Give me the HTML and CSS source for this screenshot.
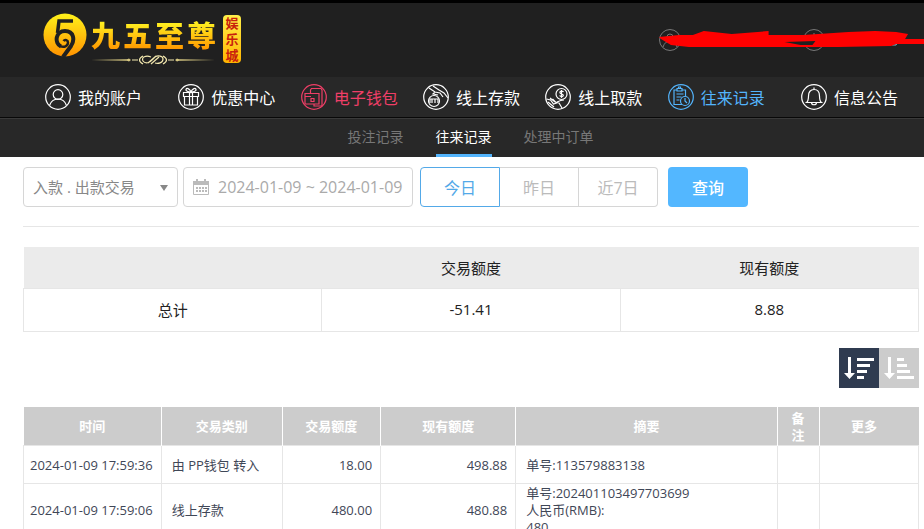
FILE: index.html
```html
<!DOCTYPE html>
<html lang="zh-CN">
<head>
    <meta charset="UTF-8">
    <meta name="viewport" content="width=device-width, initial-scale=1.0">
    <title>往来记录</title>
    <link rel="stylesheet" href="styles.css">
</head>
<body>
    <header class="header">
        <a class="logo" href="#">
            <svg class="logo-mark" viewBox="0 0 44 44">
                <defs>
                    <linearGradient id="gold" x1="0" y1="0" x2="0" y2="1">
                        <stop offset="0" stop-color="#fff21a"/>
                        <stop offset="1" stop-color="#ff9200"/>
                    </linearGradient>
                </defs>
                <circle cx="22" cy="22" r="21.500" fill="url(#gold)"/>
                <g fill="none" stroke="#202020">
                    <path d="M30 8H16L14.500 20" stroke-width="3.500"/>
                    <path d="M18 33.500C11 30 12.500 18 22 18C31 18 32 27 28 33L20 44" stroke-width="4"/>
                    <path d="M17 33C21 35 25 33 25 29.500C25 27 22 26 20.500 28" stroke-width="2.500"/>
                </g>
            </svg>
            <span class="logo-text">
                <span class="logo-name"><b>九</b><b>五</b><b>至</b><b>尊</b></span>
                <svg class="logo-line" viewBox="0 0 124 12">
                    <path d="M0 6L36 5.300L38 4.500L40 6L38 7.500L36 6.700ZM124 6L88 5.300L86 4.500L84 6L86 7.500L88 6.700Z" fill="#d9ca83"/>
                    <g fill="none" stroke="#f2e7ae" stroke-width="1.200">
                        <path d="M41 6h6M77 6h6M52 2q-7 4 0 8M72 2q7 4 0 8"/>
                        <path d="M60 3c-5-2-10 0-8 4c2 3 7 2 9-1l3-3c3-2 8-1 8 2c0 4-5 5-8 4M57 9L65 2M60 10L68 3"/>
                    </g>
                </svg>
            </span>
            <span class="logo-badge"><b>娱</b><b>乐</b><b>城</b></span>
        </a>
        <div class="account">
            <svg viewBox="0 0 22 22"><circle cx="11" cy="11" r="10.500"/><circle cx="11" cy="8" r="3"/><path d="M4 18q2-6 7-6t7 6"/></svg>
            <svg viewBox="0 0 22 22"><circle cx="11" cy="11" r="10.500"/><path d="M11 4v14M7 8h8"/></svg>
            <svg class="scribble" viewBox="0 0 266 20">
                <path d="M234 12v3h4l1-3" fill="none" stroke="#7fc4d8"/>
                <path d="M0 7L20 5L34 5L45 1L73 4L110 1V5H145L190 2L217 1L238 2L250 4L247 9H266V14H238L233 16L180 17H30L12 15L2 9Z" fill="#f00"/>
                <path d="M126 12L157 11L154 15L142 15Z" fill="#202020"/>
            </svg>
        </div>
    </header>

    <nav class="nav">
        <a href="#">
            <svg viewBox="0 0 26 26"><circle cx="13" cy="13" r="12.300"/><circle cx="13" cy="10.500" r="4.800"/><path d="M4.500 21.500C6 17 9 15 13 15s7 2 8.500 6.500"/></svg>
            我的账户
        </a>
        <a href="#">
            <svg viewBox="0 0 26 26"><circle cx="13" cy="13" r="12.300"/><path d="M5.500 8.500h15v4h-15zM6.500 12.500v8.500h13v-8.500M11.500 8.500V21M14.500 8.500V21M13 8C10 8 7.500 7 8 5.300C9 3.500 12 5 13 8C14 5 17 3.500 18 5.300C18.500 7 16 8 13 8"/></svg>
            优惠中心
        </a>
        <a class="hot" href="#">
            <svg viewBox="0 0 26 26"><circle cx="13" cy="13" r="12.300"/><path d="M4 9.500h14V20H4zM4 12.500h6M9.500 9.500V6l1-1.500h9.500l1 1.500v16h-8v-2M10 14.500h3v3h-3z"/></svg>
            电子钱包
        </a>
        <a href="#">
            <svg viewBox="0 0 26 26"><circle cx="13" cy="13" r="12.300"/><circle cx="11" cy="17" r="5.500"/><path d="M7 19v-4h2v4M9 15h3v4M12 15h3v4M6 4l6 4 5 1 3 4M10 2l6 4 5 3 4 5M12 8l-2 2 5 1"/></svg>
            线上存款
        </a>
        <a href="#">
            <svg viewBox="0 0 26 26"><circle cx="13" cy="13" r="12.300"/><circle cx="16.500" cy="10" r="5.500"/><path d="M18.500 8c-1-1.500-4-1-3.500.8s3.300.7 3.300 2.500-3 1.500-3.700.2M16.500 6v8M1.500 15l4 1 3 4 3-1-4-4M5 14l5 4 4 1 3 5M3 18l6 5M12 18q4-2 7-2"/></svg>
            线上取款
        </a>
        <a class="active" href="#">
            <svg viewBox="0 0 26 26"><circle cx="13" cy="13" r="12.300"/><path d="M14 20.500H6V6h3M14 6h3.500v6M9 4.500h5V7H9zM10.500 4.500V3h2v1.500M8.500 10h7M8.500 13h5M8.500 16h3"/><circle cx="17" cy="17" r="4.500"/><path d="M17 14v3l2 2"/></svg>
            往来记录
        </a>
        <a href="#">
            <svg viewBox="0 0 26 26"><circle cx="13" cy="13" r="12.300"/><path d="M5.500 18.500C7.500 17 7.500 15 7.500 12c0-4 2-6.500 5.500-6.500s5.500 2.500 5.500 6.500c0 3 0 5 2 6.500zM13 3.500v2M10.500 18.500c0 3 5 3 5 0"/></svg>
            信息公告
        </a>
    </nav>

    <nav class="subnav">
        <a href="#">投注记录</a>
        <a class="current" href="#">往来记录</a>
        <a href="#">处理中订单</a>
    </nav>

    <main class="content">
        <form class="filter">
            <div class="type">
                <select aria-label="交易类别">
                    <option>入款 . 出款交易</option>
                </select>
            </div>
            <label class="date">
                <svg viewBox="0 0 16 16">
                    <path d="M.500 2.500h15v13H.500z" fill="none" stroke="#bbb"/>
                    <path d="M0 2h16v4H0zM3 0h2v3H3zM11 0h2v3h-2zM3 8h2v2H3zM6 8h2v2H6zM9 8h2v2H9zM12 8h2v2h-2zM3 11h2v2H3zM6 11h2v2H6zM9 11h2v2H9zM12 11h2v2h-2z" fill="#bbb"/>
                </svg>
                <input type="text" value="2024-01-09 ~ 2024-01-09" aria-label="日期">
            </label>
            <div class="days">
                <button class="selected" type="button">今日</button>
                <button type="button">昨日</button>
                <button type="button">近7日</button>
            </div>
            <button class="search" type="button">查询</button>
        </form>

        <table class="total">
            <thead>
                <tr><th></th><th>交易额度</th><th>现有额度</th></tr>
            </thead>
            <tbody>
                <tr><td>总计</td><td>-51.41</td><td>8.88</td></tr>
            </tbody>
        </table>

        <div class="sort">
            <button class="desc" type="button" aria-label="降序">
                <svg viewBox="0 0 40 40"><path d="M9 9h3v16h4l-5.500 6L5 25h4zM18 10h17v3H18zM18 16h13v3H18zM18 22h10v3H18zM18 28h7v3h-7z"/></svg>
            </button>
            <button type="button" aria-label="升序">
                <svg viewBox="0 0 40 40"><path d="M9 9h3v16h4l-5.500 6L5 25h4zM18 10h7v3h-7zM18 16h10v3H18zM18 22h13v3H18zM18 28h17v3H18z"/></svg>
            </button>
        </div>

        <table class="records">
            <colgroup>
                <col class="c-time"><col class="c-type"><col class="c-amount"><col class="c-balance"><col class="c-note"><col class="c-remark"><col class="c-more">
            </colgroup>
            <thead>
                <tr>
                    <th>时间</th>
                    <th>交易类别</th>
                    <th>交易额度</th>
                    <th>现有额度</th>
                    <th>摘要</th>
                    <th>备注</th>
                    <th class="more">更多</th>
                </tr>
            </thead>
            <tbody>
                <tr>
                    <td class="time">2024-01-09 17:59:36</td>
                    <td>由 PP钱包 转入</td>
                    <td class="num">18.00</td>
                    <td class="num">498.88</td>
                    <td>单号:113579883138</td>
                    <td></td>
                    <td></td>
                </tr>
                <tr>
                    <td class="time">2024-01-09 17:59:06</td>
                    <td>线上存款</td>
                    <td class="num">480.00</td>
                    <td class="num">480.88</td>
                    <td>单号:202401103497703699<br>人民币(RMB):<br>480</td>
                    <td></td>
                    <td></td>
                </tr>
            </tbody>
        </table>
    </main>
</body>
</html>
```

FILE: styles.css
```css
* {
    box-sizing: border-box;
}
body {
    margin: 0;
    background-color: #fff;
    color: #222;
    font-family: "Open Sans", "Noto Sans CJK SC", sans-serif;
    font-size: 13px;
}
a {
    text-decoration: none;
}
button, input, select {
    font-family: inherit;
    margin: 0;
}

/* header */
.header {
    display: flex;
    justify-content: space-between;
    height: 77px;
    padding: 10px 0 0 43px;
    border-top: 3px solid #000;
    background-color: #202020;
}
.logo {
    display: flex;
}
.logo-mark {
    width: 44px;
    height: 44px;
}
.logo-text {
    margin: 5px 0 0 4px;
}
.logo-name {
    display: flex;
    gap: 3px;
    height: 36px;
    line-height: 36px;
    font-size: 29px;
    font-weight: 900;
    background: linear-gradient(#ffee20 15%, #ff9a00 85%);
    -webkit-background-clip: text;
    background-clip: text;
    color: transparent;
}
.logo-line {
    display: block;
    width: 124px;
    height: 12px;
}
.logo-badge {
    display: flex;
    flex-direction: column;
    width: 18px;
    height: 48px;
    margin: 2px 0 0 7px;
    border-radius: 4px;
    background: linear-gradient(#fff04a, #ffb400);
    color: #c8200c;
    font-family: "Noto Sans CJK SC", sans-serif;
    font-size: 13px;
    line-height: 16px;
    text-align: center;
}
.account {
    position: relative;
    display: flex;
    gap: 122px;
    width: 265px;
    padding-top: 16px;
}
.account svg {
    width: 22px;
    height: 22px;
    fill: none;
    stroke: #777;
}
.account .scribble {
    position: absolute;
    top: 17px;
    left: 0;
    width: 265px;
    height: 20px;
    stroke: none;
}

/* navigation */
.nav {
    display: flex;
    justify-content: space-between;
    height: 41px;
    padding: 0 26px 0 45px;
    border-bottom: 1px solid #080808;
    background-color: #282828;
}
.nav a {
    display: flex;
    align-items: center;
    gap: 7px;
    color: #fff;
    font-size: 16px;
}
.nav a:first-child {
    margin-right: 11px;
}
.nav a:last-child {
    margin-left: 11px;
}
.nav svg {
    width: 26px;
    height: 26px;
    fill: none;
    stroke: currentColor;
    stroke-width: 1.2;
}
.nav .hot {
    color: #ef3f67;
}
.nav .active {
    color: #53b4fc;
}
.subnav {
    display: flex;
    justify-content: center;
    gap: 32px;
    height: 39px;
    padding-left: 17px;
    border-top: 1px solid #3a3a3a;
    background-color: #282828;
}
.subnav a {
    color: #777;
    font-size: 14px;
    line-height: 35px;
}
.subnav .current {
    border-bottom: 3px solid #53b4fc;
    color: #fff;
}

/* filter */
.content {
    padding: 10px 5px 0 23px;
}
.filter {
    display: flex;
    padding-bottom: 19px;
    border-bottom: 1px solid #e6e6e6;
}
.type {
    position: relative;
    width: 155px;
    margin-right: 5px;
}
.type::after {
    content: "";
    position: absolute;
    top: 18px;
    right: 10px;
    border: 4px solid transparent;
    border-top: 6px solid #888;
    border-bottom: 0;
    pointer-events: none;
}
.type select {
    width: 100%;
    height: 40px;
    padding: 0 9px;
    border: 1px solid #d6d6d6;
    border-radius: 4px;
    background-color: #fff;
    color: #888;
    font-size: 15px;
    appearance: none;
}
.date {
    display: flex;
    align-items: center;
    gap: 9px;
    width: 230px;
    height: 40px;
    margin-right: 7px;
    padding-left: 9px;
    border: 1px solid #d6d6d6;
    border-radius: 4px;
}
.date svg {
    width: 16px;
    height: 16px;
}
.date input {
    flex: 1;
    min-width: 0;
    padding: 0;
    border: 0;
    color: #aaa;
    font-size: 16px;
}
.days {
    display: flex;
    margin-right: 10px;
}
.days button {
    width: 79px;
    height: 40px;
    padding: 0;
    border: 1px solid #d6d6d6;
    border-left: 0;
    background-color: #fff;
    color: #bbb;
    font-size: 16px;
}
.days .selected {
    width: 80px;
    border: 1px solid #53a9e8;
    border-radius: 4px 0 0 4px;
    color: #53a9e8;
}
.days button:last-child {
    border-radius: 0 4px 4px 0;
}
.search {
    width: 80px;
    height: 40px;
    padding: 0;
    border: 0;
    border-radius: 4px;
    background-color: #53b7ff;
    color: #fff;
    font-size: 16px;
    font-weight: 500;
}

/* tables */
table {
    width: 100%;
    border-collapse: collapse;
    table-layout: fixed;
}
.total {
    margin-top: 20px;
    font-size: 15px;
    text-align: center;
}
.total th {
    height: 41px;
    padding: 0;
    background-color: #ebebeb;
    font-weight: normal;
}
.total td {
    height: 43px;
    padding: 0 0 1px;
    border: 1px solid #e6e6e6;
}
.sort {
    display: flex;
    justify-content: flex-end;
    margin: 16px 0 19px;
}
.sort button {
    width: 40px;
    height: 40px;
    padding: 0;
    border: 0;
    background-color: #ccc;
}
.sort .desc {
    background-color: #2f3b50;
}
.sort svg {
    display: block;
    fill: #fff;
}
.records {
    color: #3f4757;
    line-height: 17px;
}
.c-time {
    width: 15.4%;
}
.c-type {
    width: 13.5%;
}
.c-amount {
    width: 11%;
}
.c-balance {
    width: 15.1%;
}
.c-note {
    width: 29.2%;
}
.c-remark {
    width: 4.7%;
}
.c-more {
    width: 11.1%;
}
.records th {
    height: 39px;
    padding: 2px 12px 0;
    border-right: 1px solid #fff;
    background-color: #ccc;
    color: #fff;
}
.records th:last-child {
    border-right: 0;
}
.records .more {
    padding-right: 22px;
}
.records td {
    height: 38px;
    padding: 1px 10px 0;
    border: 1px solid #e6e6e6;
}
.records .time {
    padding: 1px 0 0 6px;
    white-space: nowrap;
}
.records .num {
    padding-right: 8px;
    text-align: right;
}
```
